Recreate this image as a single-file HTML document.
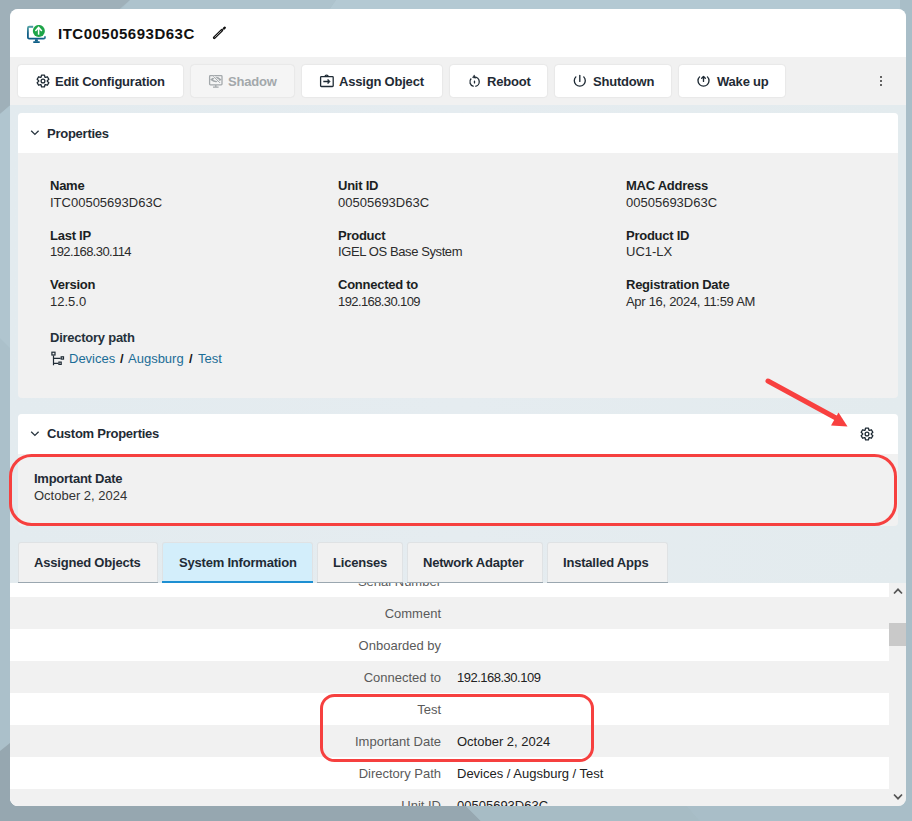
<!DOCTYPE html>
<html><head><meta charset="utf-8">
<style>
*{box-sizing:border-box;margin:0;padding:0}
html,body{width:912px;height:821px;overflow:hidden}
body{position:relative;font-family:"Liberation Sans",sans-serif;background:#a8bcc6}
.abs{position:absolute}
#bg{position:absolute;left:0;top:0;width:912px;height:821px}
#card{position:absolute;left:10px;top:9px;width:896px;height:797px;border-radius:8px;overflow:hidden;
 background:linear-gradient(90deg,#e3ebef 0%,#e5ecf0 50%,#e3ebee 100%)}
#hdr{position:absolute;left:0;top:0;width:896px;height:48px;background:#fff}
#tb{position:absolute;left:0;top:48px;width:896px;height:48px;background:#f1f1f1}
.btn{position:absolute;top:8px;height:32px;background:#fff;border-radius:3px;box-shadow:0 0 1.5px rgba(0,0,0,0.16);color:#1f2b35;font-weight:700;font-size:13px;letter-spacing:-0.2px;white-space:nowrap}
.btn span{position:absolute;top:9px}
.btn svg{position:absolute;top:9px}
.btn.dis{background:#f5f5f5;color:#a3a8ab}
.panel{position:absolute;left:8px;width:880px;border-radius:4px;overflow:hidden;background:#f1f1f1}
.ph{position:absolute;left:0;top:0;width:880px;height:40px;background:#fff;color:#1f2b35;font-weight:700;font-size:13px;letter-spacing:-0.25px}
.lbl{position:absolute;font-weight:700;font-size:13px;color:#1b1f23;letter-spacing:-0.25px;white-space:nowrap}
.val{position:absolute;font-size:13px;color:#2b2b2b;white-space:nowrap}
.tab{position:absolute;top:533px;height:41px;background:#f1f1f1;border:1px solid #dfe2e4;border-bottom:none;border-radius:3px 3px 0 0;color:#1f2b35;font-weight:700;font-size:13px;letter-spacing:-0.2px;white-space:nowrap}
.tab:after{content:"";position:absolute;left:-1px;right:-1px;bottom:0;height:1px;background:#9aa7b0}
.tab span{position:absolute;top:12px}
.tab.sel{background:#d3eefb}
.tab.sel:after{height:2px;background:#1d8fd2}
#tbl{position:absolute;left:0;top:574px;width:879px;height:223px;overflow:hidden;background:#fff}
.row{position:absolute;left:0;width:879px;height:32px}
.row.g{background:#f1f1f1}
.row .k{position:absolute;right:448px;top:9px;font-size:13px;color:#5a5a5a;white-space:nowrap;text-align:right}
.row .v{position:absolute;left:447px;top:9px;font-size:13px;color:#222;white-space:nowrap}
#sb{position:absolute;left:879px;top:574px;width:17px;height:223px;background:#f1f1f1}
</style></head>
<body>
<svg id="bg" width="912" height="821" viewBox="0 0 912 821">
 <rect x="0" y="0" width="912" height="821" fill="#abc0ca"/>
 <polygon points="336,0 912,0 912,10 329,10" fill="#b4c9d3"/>
 <polygon points="130,0 336,0 329,10 121,10" fill="#aec3cd"/>
 <polygon points="0,114 130,0 0,0" fill="#9fb0b9"/>
 <polygon points="0,114 12,104 12,350 0,338" fill="#b0c5cf"/>
 <rect x="900" y="0" width="12" height="821" fill="#a9bec8"/>
 <polygon points="0,751 228,568 481,821 0,821" fill="#96a7b0"/>
 <polygon points="481,821 700,821 687,806 466,806" fill="#a7bcc5"/>
 <polygon points="700,821 912,821 912,806 687,806" fill="#a9bec8"/>
</svg>

<div id="card">
 <div id="hdr">
  <svg class="abs" style="left:17px;top:16px" width="20" height="19" viewBox="0 0 20 19">
   <defs><radialGradient id="mg" gradientUnits="userSpaceOnUse" cx="7" cy="15" r="15"><stop offset="0" stop-color="#0c5a86"/><stop offset="0.6" stop-color="#125f87"/><stop offset="1" stop-color="#5aa9a9"/></radialGradient></defs>
   <path d="M6.2 1.75H2.2Q0.9 1.75 0.9 3V12.4Q0.9 13.6 2.2 13.6H16.8Q18 13.6 18 12.4V11.2" fill="none" stroke="url(#mg)" stroke-width="1.8"/>
   <path d="M8.1 14.3H10.7L11 16.4H7.8Z" fill="#0f5f87"/>
   <rect x="6.1" y="16.2" width="6.8" height="1.7" rx="0.7" fill="#0f5f87"/>
   <circle cx="11.85" cy="6.0" r="6.05" fill="#1ea448"/>
   <path d="M11.6 9.7V2.9" fill="none" stroke="#fff" stroke-width="1.5"/>
   <path d="M8.4 6.0L11.6 2.4L14.8 6.0" fill="none" stroke="#fff" stroke-width="1.5" stroke-linejoin="miter"/>
  </svg>
  <div class="abs" style="left:48px;top:16px;font-weight:700;font-size:15px;letter-spacing:0.5px;color:#111">ITC00505693D63C</div>
  <svg class="abs" style="left:200px;top:16px" width="18" height="18" viewBox="0 0 18 18"><path d="M4.2 12.8L11.9 5.2" stroke="#111" stroke-width="2.7" stroke-linecap="round"/><path d="M4.6 12.4L11.5 5.6" stroke="#c8c8c8" stroke-width="0.8"/><path d="M13.8 3.6L14.8 2.7" stroke="#111" stroke-width="2.3" stroke-linecap="round"/></svg>
 </div>
 <div id="tb">
  <div class="btn" style="left:8px;width:165px">
   <svg style="left:18px" width="14" height="14" viewBox="0 0 14 14"><path fill="none" stroke="#1f2b35" stroke-width="1.3" stroke-linejoin="round" d="M8.88 3.14 L8.48 1.08 L5.52 1.08 L5.12 3.14 L4.60 3.44 L2.61 2.76 L1.14 5.32 L2.71 6.70 L2.71 7.30 L1.14 8.68 L2.61 11.24 L4.60 10.56 L5.12 10.86 L5.52 12.92 L8.48 12.92 L8.88 10.86 L9.40 10.56 L11.39 11.24 L12.86 8.68 L11.29 7.30 L11.29 6.70 L12.86 5.32 L11.39 2.76 L9.40 3.44Z"/><circle cx="7" cy="7" r="1.9" fill="none" stroke="#1f2b35" stroke-width="1.3"/></svg>
   <span style="left:37px">Edit Configuration</span>
  </div>
  <div class="btn dis" style="left:181px;width:103px">
   <svg style="left:17px" width="15" height="14" viewBox="0 0 15 14"><rect x="1.6" y="1.6" width="12.4" height="9.3" rx="0.8" fill="none" stroke="#a3a8ab" stroke-width="1.3"/><path d="M7.8 11V12.8M5 13.1H10.6" stroke="#a3a8ab" stroke-width="1.3"/><path d="M3.4 5.6Q8 1.6 12.3 5.6Q8 9.4 3.4 5.6Z" fill="none" stroke="#a3a8ab" stroke-width="1.6"/><path d="M5.2 2.3L12 8.8" stroke="#f5f5f5" stroke-width="2.2"/><path d="M5.3 2.2L12 8.9" stroke="#a3a8ab" stroke-width="1"/></svg>
   <span style="left:37px">Shadow</span>
  </div>
  <div class="btn" style="left:292px;width:140px">
   <svg style="left:17px" width="15" height="14" viewBox="0 0 15 14"><rect x="1.6" y="2.6" width="12.6" height="9.9" rx="0.8" fill="none" stroke="#1f2b35" stroke-width="1.3"/><path d="M6 2.6Q6 1.2 7.6 1.2Q9.2 1.2 9.2 2.6" fill="none" stroke="#1f2b35" stroke-width="1.2"/><path d="M4.3 7.5H10" fill="none" stroke="#1f2b35" stroke-width="1.3"/><path d="M8.9 5.2L11.1 7.5L8.9 9.8Z" fill="#1f2b35" stroke="#1f2b35" stroke-width="0.6" stroke-linejoin="round"/></svg>
   <span style="left:37px">Assign Object</span>
  </div>
  <div class="btn" style="left:440px;width:97px">
   <svg style="left:17px" width="14" height="14" viewBox="0 0 14 14"><path d="M8.3 12.35A4.6 4.6 0 0 0 7.5 3.2" fill="none" stroke="#1f2b35" stroke-width="1.3"/><path d="M6.7 12.35A4.6 4.6 0 0 1 4.25 4.55" fill="none" stroke="#1f2b35" stroke-width="1.3"/><path d="M7.3 0.9L5.5 3.5L8.5 4.3Z" fill="#1f2b35" stroke="#1f2b35" stroke-width="0.5" stroke-linejoin="round"/><path d="M7.5 7.1V8.9" stroke="#1f2b35" stroke-width="1.3" stroke-linecap="round"/></svg>
   <span style="left:37px">Reboot</span>
  </div>
  <div class="btn" style="left:545px;width:116px">
   <svg style="left:17px" width="14" height="14" viewBox="0 0 14 14"><path d="M3.84 2.88A5.5 5.5 0 1 0 11.76 2.88" fill="none" stroke="#1f2b35" stroke-width="1.35" stroke-linecap="round"/><path d="M7.8 1.4V7.4" stroke="#1f2b35" stroke-width="1.35" stroke-linecap="round"/></svg>
   <span style="left:38px">Shutdown</span>
  </div>
  <div class="btn" style="left:669px;width:106px">
   <svg style="left:17px" width="14" height="14" viewBox="0 0 14 14"><path d="M3.54 2.88A5.5 5.5 0 1 0 11.46 2.88" fill="none" stroke="#1f2b35" stroke-width="1.35" stroke-linecap="round"/><path d="M7.5 2.8V7.4" stroke="#1f2b35" stroke-width="1.35" stroke-linecap="round"/><path d="M5.7 4.3L7.5 2.5L9.3 4.3" fill="none" stroke="#1f2b35" stroke-width="1.35" stroke-linejoin="round" stroke-linecap="round"/></svg>
   <span style="left:38px">Wake up</span>
  </div>
  <div class="abs" style="left:870px;top:19px;width:2px;height:10px">
   <div class="abs" style="left:0;top:0;width:2px;height:2px;background:#333;border-radius:1px"></div>
   <div class="abs" style="left:0;top:4px;width:2px;height:2px;background:#333;border-radius:1px"></div>
   <div class="abs" style="left:0;top:8px;width:2px;height:2px;background:#333;border-radius:1px"></div>
  </div>
 </div>

 <!-- Properties panel -->
 <div class="panel" style="top:104px;height:285px">
  <div class="ph">
   <svg class="abs" style="left:12px;top:17px" width="10" height="6" viewBox="0 0 10 6"><path d="M1.2 0.8L4.9 4.4L8.6 0.8" fill="none" stroke="#2a3640" stroke-width="1.35"/></svg>
   <span class="abs" style="left:29px;top:13px">Properties</span>
  </div>
 </div>
 <div class="lbl" style="left:40px;top:169px">Name</div>
 <div class="val" style="left:40px;top:186px">ITC00505693D63C</div>
 <div class="lbl" style="left:40px;top:219px">Last IP</div>
 <div class="val" style="left:40px;top:235px;letter-spacing:-0.6px">192.168.30.114</div>
 <div class="lbl" style="left:40px;top:268px">Version</div>
 <div class="val" style="left:40px;top:285px">12.5.0</div>
 <div class="lbl" style="left:40px;top:321px;color:#25313b">Directory path</div>

 <div class="lbl" style="left:328px;top:169px">Unit ID</div>
 <div class="val" style="left:328px;top:186px">00505693D63C</div>
 <div class="lbl" style="left:328px;top:219px">Product</div>
 <div class="val" style="left:328px;top:235px;letter-spacing:-0.4px">IGEL OS Base System</div>
 <div class="lbl" style="left:328px;top:268px">Connected to</div>
 <div class="val" style="left:328px;top:285px;letter-spacing:-0.6px">192.168.30.109</div>

 <div class="lbl" style="left:616px;top:169px">MAC Address</div>
 <div class="val" style="left:616px;top:186px">00505693D63C</div>
 <div class="lbl" style="left:616px;top:219px">Product ID</div>
 <div class="val" style="left:616px;top:235px">UC1-LX</div>
 <div class="lbl" style="left:616px;top:268px">Registration Date</div>
 <div class="val" style="left:616px;top:285px;letter-spacing:-0.3px">Apr 16, 2024, 11:59 AM</div>

 <svg class="abs" style="left:41px;top:341px" width="16" height="17" viewBox="0 0 16 17"><rect x="0.9" y="2.2" width="3.1" height="2.8" fill="none" stroke="#1f2b35" stroke-width="1.2"/><rect x="10.2" y="6.8" width="2.3" height="2.3" fill="none" stroke="#1f2b35" stroke-width="1.2"/><rect x="7.9" y="12.1" width="2.3" height="2.3" fill="none" stroke="#1f2b35" stroke-width="1.2"/><path d="M2.5 5.4V15.2M2.5 8.3H9.6M2.5 13.3H7.3" fill="none" stroke="#1f2b35" stroke-width="1.2"/></svg>
 <div class="val" style="left:59px;top:342px;color:#1b6d97">Devices</div>
 <div class="val" style="left:110px;top:342px;color:#1a1a1a;font-weight:700">/</div>
 <div class="val" style="left:118px;top:342px;color:#1b6d97">Augsburg</div>
 <div class="val" style="left:179px;top:342px;color:#1a1a1a;font-weight:700">/</div>
 <div class="val" style="left:188px;top:342px;color:#1b6d97">Test</div>

 <!-- Custom properties -->
 <div class="panel" style="top:405px;height:112px">
  <div class="ph">
   <svg class="abs" style="left:12px;top:17px" width="10" height="6" viewBox="0 0 10 6"><path d="M1.2 0.8L4.9 4.4L8.6 0.8" fill="none" stroke="#2a3640" stroke-width="1.35"/></svg>
   <span class="abs" style="left:29px;top:12px">Custom Properties</span>
   <svg class="abs" style="left:842px;top:13px" width="14" height="14" viewBox="0 0 14 14"><path fill="none" stroke="#1f2b35" stroke-width="1.3" stroke-linejoin="round" d="M8.88 3.14 L8.48 1.08 L5.52 1.08 L5.12 3.14 L4.60 3.44 L2.61 2.76 L1.14 5.32 L2.71 6.70 L2.71 7.30 L1.14 8.68 L2.61 11.24 L4.60 10.56 L5.12 10.86 L5.52 12.92 L8.48 12.92 L8.88 10.86 L9.40 10.56 L11.39 11.24 L12.86 8.68 L11.29 7.30 L11.29 6.70 L12.86 5.32 L11.39 2.76 L9.40 3.44Z"/><circle cx="7" cy="7" r="1.9" fill="none" stroke="#1f2b35" stroke-width="1.3"/></svg>
  </div>
 </div>
 <div class="lbl" style="left:24px;top:462px;color:#1f2b35">Important Date</div>
 <div class="val" style="left:24px;top:479px;color:#333">October 2, 2024</div>

 <!-- Tabs -->
 <div class="tab" style="left:8px;width:140px"><span style="left:15px">Assigned Objects</span></div>
 <div class="tab sel" style="left:152px;width:151px"><span style="left:16px">System Information</span></div>
 <div class="tab" style="left:307px;width:86px"><span style="left:15px">Licenses</span></div>
 <div class="tab" style="left:397px;width:136px"><span style="left:15px">Network Adapter</span></div>
 <div class="tab" style="left:537px;width:121px"><span style="left:15px">Installed Apps</span></div>

 <!-- Table -->
 <div id="tbl">
  <div class="row" style="top:-18px"><span class="k">Serial Number</span></div>
  <div class="row g" style="top:14px"><span class="k">Comment</span></div>
  <div class="row" style="top:46px"><span class="k">Onboarded by</span></div>
  <div class="row g" style="top:78px"><span class="k">Connected to</span><span class="v" style="letter-spacing:-0.5px">192.168.30.109</span></div>
  <div class="row" style="top:110px"><span class="k">Test</span></div>
  <div class="row g" style="top:142px"><span class="k">Important Date</span><span class="v">October 2, 2024</span></div>
  <div class="row" style="top:174px"><span class="k">Directory Path</span><span class="v">Devices / Augsburg / Test</span></div>
  <div class="row g" style="top:206px"><span class="k">Unit ID</span><span class="v">00505693D63C</span></div>
 </div>
 <div id="sb">
  <svg class="abs" style="left:4px;top:4px" width="10" height="8" viewBox="0 0 10 8"><path d="M1 6.5L5 2.3L9 6.5" fill="none" stroke="#555" stroke-width="1.7"/></svg>
  <div class="abs" style="left:0;top:40px;width:17px;height:23px;background:#c9c9c9"></div>
  <svg class="abs" style="left:4px;top:210px" width="10" height="8" viewBox="0 0 10 8"><path d="M1 1.5L5 5.7L9 1.5" fill="none" stroke="#555" stroke-width="1.7"/></svg>
 </div>
</div>

<!-- Annotations -->
<svg class="abs" style="left:0;top:0" width="912" height="821" viewBox="0 0 912 821">
 <rect x="10.5" y="455.5" width="885" height="69" rx="21" fill="none" stroke="#f6403f" stroke-width="3"/>
 <rect x="321.5" y="695.5" width="271" height="65" rx="13" fill="none" stroke="#f6403f" stroke-width="3"/>
 <line x1="768" y1="381" x2="836" y2="418" stroke="#f8403f" stroke-width="5" stroke-linecap="round"/>
 <polygon points="847.5,426.5 831,425.5 838.5,412.5" fill="#f8403f"/>
</svg>
</body></html>
